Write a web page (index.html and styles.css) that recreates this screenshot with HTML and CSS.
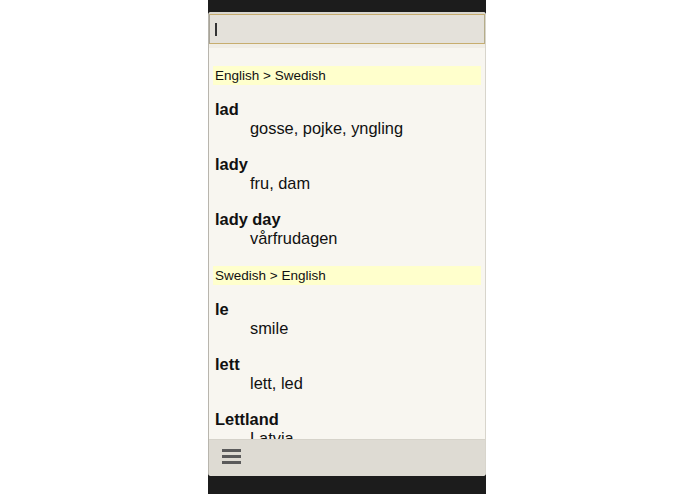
FILE: index.html
```html
<!DOCTYPE html>
<html>
<head>
<meta charset="utf-8">
<link rel="stylesheet" href="styles.css">
</head>
<body>
<div class="phone">
  <div class="statusbar"></div>
  <div class="window">
    <div class="searchwrap">
      <div class="search"><span class="cursor"></span></div>
    </div>
    <div class="band"></div>
    <div class="content">
      <div class="section">
        <div class="header">English &gt; Swedish</div>
        <div class="entry"><div class="word">lad</div><div class="trans">gosse, pojke, yngling</div></div>
        <div class="entry"><div class="word">lady</div><div class="trans">fru, dam</div></div>
        <div class="entry"><div class="word">lady day</div><div class="trans">vårfrudagen</div></div>
      </div>
      <div class="section">
        <div class="header">Swedish &gt; English</div>
        <div class="entry"><div class="word">le</div><div class="trans">smile</div></div>
        <div class="entry"><div class="word">lett</div><div class="trans">lett, led</div></div>
        <div class="entry"><div class="word">Lettland</div><div class="trans">Latvia</div></div>
      </div>
    </div>
    <div class="toolbar">
      <div class="menu"><span></span><span></span><span></span></div>
    </div>
  </div>
  <div class="navbar"></div>
</div>
</body>
</html>
```
FILE: styles.css
```css
html, body {
  margin: 0;
  padding: 0;
  background: #ffffff;
}
body {
  font-family: "Liberation Sans", Arial, sans-serif;
  color: #111;
}
.phone {
  margin-left: 208px;
  width: 278px;
  height: 494px;
  display: flex;
  flex-direction: column;
  background: #1c1c1c;
}
.statusbar {
  height: 12px;
  flex: none;
  background: #1c1c1c;
}
.window {
  height: 464px;
  flex: none;
  display: flex;
  flex-direction: column;
  background: #f8f6f0;
  border-radius: 3px;
  overflow: hidden;
  border-left: 1px solid #b8b5ad;
  border-right: 1px solid #d8d5cc;
  box-sizing: border-box;
}
.searchwrap {
  flex: none;
  padding: 2px 0 0 0;
  background: #d9d6ce;
}
.search {
  height: 28px;
  background: #e4e1da;
  border-top: 1px solid #c7ad6e;
  border-bottom: 1px solid #c7ad6e;
  border-left: 1px solid #a8a498;
  border-right: 1px solid #b5ad8a;
  display: flex;
  align-items: center;
  padding-left: 5px;
}
.cursor {
  width: 2px;
  height: 13px;
  background: #333;
}
.band {
  height: 4px;
  flex: none;
  background: #f0ede5;
}
.content {
  flex: 1;
  overflow: hidden;
  padding: 18px 4px 0 4px;
  display: flex;
  flex-direction: column;
  gap: 1px;
}
.header {
  height: 19px;
  line-height: 19px;
  background: #ffffcc;
  font-size: 13.5px;
  padding-left: 2px;
  margin-bottom: 15px;
  color: #111;
}
.entry {
  padding-left: 2px;
  margin-bottom: 17px;
  font-size: 16.4px;
  line-height: 19px;
}
.word {
  font-weight: bold;
}
.trans {
  padding-left: 35px;
}
.toolbar {
  flex: none;
  height: 37px;
  background: #dedbd3;
  border-top: 1px solid #d6d3ca;
  box-sizing: border-box;
  display: flex;
  align-items: center;
  padding-left: 13px;
  padding-bottom: 3px;
  border-radius: 0 0 3px 3px;
}
.menu {
  width: 19px;
  display: flex;
  flex-direction: column;
  gap: 3px;
}
.menu span {
  display: block;
  height: 3px;
  background: #5a5a5a;
}
.navbar {
  flex: 1;
  background: #1c1c1c;
}
```
